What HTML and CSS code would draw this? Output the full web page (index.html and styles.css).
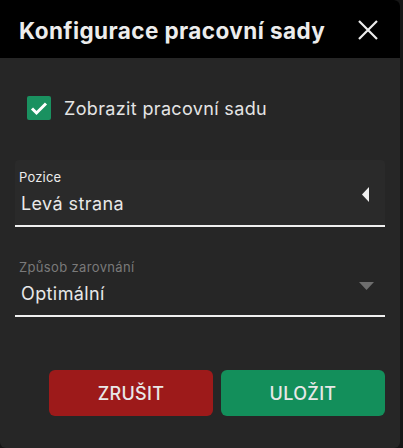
FILE: index.html
```html
<!DOCTYPE html>
<html lang="cs">
<head>
<meta charset="utf-8">
<link rel="stylesheet" href="styles.css">
</head>
<body>
<div class="dialog">
  <div class="header">
    <h1 class="title">Konfigurace pracovní sady</h1>
    <svg class="close" width="20" height="20" viewBox="0 0 20 20"><path d="M1 1L19 19M19 1L1 19" stroke="#ececec" stroke-width="2.2" fill="none"/></svg>
  </div>
  <div class="body">
    <label class="check">
      <span class="box"><svg width="24" height="24" viewBox="0 0 24 24"><path d="M5 12.5l4.5 4.5L19 7.5" stroke="#fff" stroke-width="3" fill="none"/></svg></span>
      <span class="check-text">Zobrazit pracovní sadu</span>
    </label>
    <div class="field filled">
      <div class="label">Pozice</div>
      <div class="value-row">
        <span class="value">Levá strana</span>
        <svg class="arrow" width="7" height="15" viewBox="0 0 7 15"><path d="M7 0L0 7.5L7 15Z" fill="#f0f0f0"/></svg>
      </div>
    </div>
    <div class="field">
      <div class="label muted">Způsob zarovnání</div>
      <div class="value-row">
        <span class="value">Optimální</span>
        <svg class="arrow down" width="15" height="8" viewBox="0 0 15 8"><path d="M0 0H15L7.5 8Z" fill="#6e6e6e"/></svg>
      </div>
    </div>
    <div class="actions">
      <button class="btn cancel">ZRUŠIT</button>
      <button class="btn save">ULOŽIT</button>
    </div>
  </div>
</div>
</body>
</html>
```
FILE: styles.css
```css
html, body {
  margin: 0;
  padding: 0;
  background: #161616;
  height: 100%;
}
body {
  font-family: Inter, "Noto Sans", sans-serif;
  color: #e8e8e8;
  overflow: hidden;
}
.dialog {
  width: 400px;
  height: 448px;
  background: #262626;
  border-radius: 0 6px 6px 6px;
  overflow: hidden;
  display: flex;
  flex-direction: column;
}
.header {
  height: 58px;
  background: #000;
  display: flex;
  align-items: center;
  justify-content: space-between;
  padding: 0 22px 0 19px;
  flex-shrink: 0;
}
.title {
  margin: 0;
  font-size: 22.5px;
  font-weight: 700;
  color: #ececec;
  letter-spacing: 0.42px;
  padding-top: 2px;
}
.close {
  display: block;
  margin-top: 2px;
}
.body {
  padding: 38px 15px 0 15px;
  display: flex;
  flex-direction: column;
}
.check {
  display: flex;
  align-items: center;
  gap: 13px;
  margin-left: 12px;
  height: 24px;
}
.box {
  width: 24px;
  height: 24px;
  background: #1a9160;
  border-radius: 2px;
  display: block;
}
.box svg { display: block; }
.check-text {
  font-size: 18px;
  color: #e4e4e4;
  letter-spacing: 0.35px;
}
.field {
  margin-top: 40px;
  height: 67px;
  padding: 8px 16px 0 4px;
  box-sizing: border-box;
  border-bottom: 2px solid #efefef;
  display: flex;
  flex-direction: column;
}
.field.filled {
  background: #2a2a2a;
  border-radius: 4px 4px 0 0;
}
.field + .field { margin-top: 23px; }
.label {
  font-size: 13px;
  color: #ececec;
  line-height: 18px;
  letter-spacing: 0.2px;
}
.label.muted { color: #7a7a7a; letter-spacing: 0.35px; }
.value-row {
  display: flex;
  align-items: center;
  justify-content: space-between;
  margin-top: 6px;
}
.value {
  font-size: 18px;
  color: #e8e8e8;
  line-height: 24px;
  padding-left: 2px;
  letter-spacing: 0.4px;
}
.arrow { display: block; margin-top: -20px; margin-right: 0; }
.arrow.down { margin-right: -5px; margin-top: -16px; }
.actions {
  display: flex;
  justify-content: flex-end;
  gap: 8px;
  margin-top: 53px;
}
.btn {
  width: 164px;
  height: 46px;
  border: none;
  border-radius: 6px;
  font-family: Inter, "Noto Sans", sans-serif;
  font-size: 18px;
  font-weight: 500;
  letter-spacing: 0.3px;
  color: #e8e8e8;
}
.cancel { background: #9d1a1a; }
.save { background: #138f5b; }
```
